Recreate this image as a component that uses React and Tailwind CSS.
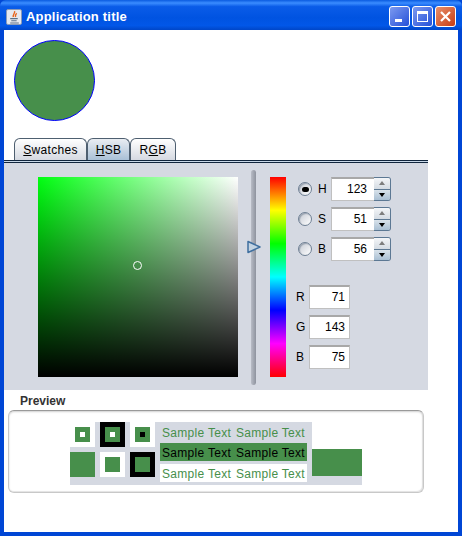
const green = "bg-[#478f4b]";

const Spinner = ({ value, label, checked }) => (
  <div className="flex items-center h-6">
    <span className="w-[14px] h-[14px] rounded-full border border-[#6f8094] flex items-center justify-center bg-[linear-gradient(135deg,#c4c9d3,#ffffff)] shadow-[inset_1px_1px_1px_#9aa3b0]">
      {checked && <span className="w-[7px] h-[5px] rounded-full bg-black" />}
    </span>
    <span className="w-[13px] ml-[6px] text-xs text-black">{label}</span>
    <div className="w-[43px] h-6 bg-white border-t-2 border-[#a8a8a8] border-b border-b-[#c0c0c0] border-l border-l-[#c0c0c0] text-xs text-black text-right pr-[7px] leading-[21px]">
      {value}
    </div>
    <div className="w-[17px] h-6 flex flex-col rounded-r-[3px] overflow-hidden border border-l-0 border-[#5c7893]">
      <div className="flex-1 bg-[linear-gradient(#f4f6f8,#d4dbe3)] flex items-center justify-center">
        <span className="w-0 h-0 border-x-[3px] border-x-transparent border-b-[4px] border-b-[#7d7d7d]" />
      </div>
      <div className="flex-1 bg-[linear-gradient(#d9e2ea,#a9bfd3)] border-t border-[#5c7893] flex items-center justify-center">
        <span className="w-0 h-0 border-x-[3px] border-x-transparent border-t-[4px] border-t-black" />
      </div>
    </div>
  </div>
);

const RgbField = ({ label, value }) => (
  <div className="flex items-center h-6">
    <span className="w-[13px] text-xs text-black">{label}</span>
    <div className="w-[41px] h-6 bg-white border-t-2 border-[#a8a8a8] border-b border-b-[#c0c0c0] border-x border-x-[#c0c0c0] text-xs text-black text-right pr-[4px] leading-[21px]">
      {value}
    </div>
  </div>
);

const Tab = ({ children, className }) => (
  <div className={"h-[22px] border border-b-0 border-[#4e5f70] rounded-t-[6px] flex items-center justify-center text-xs tracking-[0.3px] text-black " + className}>
    {children}
  </div>
);

const Swatch = ({ outer, inner }) => (
  <div className={"w-[25px] h-[25px] flex items-center justify-center " + outer}>
    <div className={"w-[15px] h-[15px] flex items-center justify-center " + green}>
      {inner && <div className={"w-[5px] h-[5px] " + inner} />}
    </div>
  </div>
);

const SampleRow = ({ className }) => (
  <div className={"w-[147px] h-[18px] flex justify-between px-[2px] pt-[1px] text-xs tracking-[0.3px] leading-[18px] " + className}>
    <span>Sample Text</span>
    <span>Sample Text</span>
  </div>
);

const TitleButton = ({ className, children }) => (
  <div className={"w-[21px] h-[21px] rounded-[3px] border border-white flex items-center justify-center " + className}>
    {children}
  </div>
);

export default function App() {
  return (
    <div className="w-[462px] h-[536px] flex flex-col bg-[#0046d5] font-['Liberation_Sans',sans-serif] overflow-hidden">
      <div className="h-[30px] shrink-0 flex items-center pt-[3px] pl-[6px] pr-[6px] rounded-t-[6px] bg-[linear-gradient(#0a5be0_0%,#3b8dff_10%,#0a5ce8_22%,#0053e1_60%,#0257e8_85%,#0046c8_100%)]">
        <div className="w-4 h-4 bg-[#e6e9f0] rounded-[2px] border border-[#8a9ab8] flex items-center justify-center">
          <svg width="13" height="14" viewBox="0 0 12 13">
            <path d="M6 1C7 3 4 4 5 6.500M8 3C7 4 6.500 5 7 6.500" stroke="#e8641c" strokeWidth="1.300" fill="none" />
            <path d="M2 8h7M3 10h5M2 12h8" stroke="#5c7088" strokeWidth="1" fill="none" />
          </svg>
        </div>
        <span className="ml-1 mt-[1px] text-white font-bold text-[13px] tracking-[0.2px]">Application title</span>
        <div className="ml-auto flex gap-[2px]">
          <TitleButton className="bg-[linear-gradient(135deg,#7c9af0,#2550d8)]">
            <div className="w-[7px] h-[3px] bg-white mt-[8px] mr-[3px]" />
          </TitleButton>
          <TitleButton className="bg-[linear-gradient(135deg,#7c9af0,#2550d8)]">
            <div className="w-[11px] h-[11px] border border-t-[3px] border-white" />
          </TitleButton>
          <TitleButton className="bg-[linear-gradient(135deg,#e8906c,#c83c14)]">
            <svg width="13" height="13" viewBox="0 0 13 13">
              <path d="M2 2l9 9M11 2l-9 9" stroke="white" strokeWidth="2.200" />
            </svg>
          </TitleButton>
        </div>
      </div>

      <div className="flex-1 mx-1 mb-1 bg-white flex flex-col">
        <div className={"w-[81px] h-[81px] rounded-full border border-[#0000ff] mt-[10px] ml-[10px] " + green} />

        <div className="w-[424px]">
          <div className="flex mt-[17px] ml-[10px]">
            <Tab className="w-[73px] bg-[linear-gradient(#ffffff,#d5d9e1)]"><span><u>S</u>watches</span></Tab>
            <Tab className="w-[43px] bg-[linear-gradient(#e9edf2,#a9c0d6)]"><span><u>H</u>SB</span></Tab>
            <Tab className="w-[46px] bg-[linear-gradient(#ffffff,#d5d9e1)]"><span>R<u>G</u>B</span></Tab>
          </div>
          <div className="h-[3px] border-t border-b border-[#10243c] bg-[#c8d8e8]" />
          <div className="h-[227px] bg-[#d5d9e2] flex pl-[34px] pt-[14px]">
            <div className="relative w-[200px] h-[200px] bg-[linear-gradient(to_bottom,transparent,black),linear-gradient(to_right,#00ff11,white)]">
              <div className="absolute left-[95px] top-[84px] w-[9px] h-[9px] rounded-full border border-white" />
            </div>
            <div className="relative w-[5px] h-[215px] ml-[13px] -mt-[7px] rounded-full bg-[linear-gradient(to_right,#b8bcc6,#8e939e)]">
              <svg className="absolute -left-[4px] top-[70px]" width="14" height="14" viewBox="0 0 14 14">
                <path d="M1 1.500L13 7L1 12.500Z" fill="#c3d3e2" stroke="#3f6f9f" strokeWidth="1.500" strokeLinejoin="round" />
              </svg>
            </div>
            <div className="w-4 h-[200px] ml-[14px] bg-[linear-gradient(to_bottom,#ff0000,#ffff00,#00ff00,#00ffff,#0000ff,#ff00ff,#ff0000)]" />
            <div className="flex flex-col ml-[10px]">
              <div className="flex flex-col gap-[6px] ml-[2px]">
                <Spinner label="H" value="123" checked />
                <Spinner label="S" value="51" />
                <Spinner label="B" value="56" />
              </div>
              <div className="flex flex-col gap-[6px] mt-6">
                <RgbField label="R" value="71" />
                <RgbField label="G" value="143" />
                <RgbField label="B" value="75" />
              </div>
            </div>
          </div>
        </div>

        <div className="ml-4 mt-[3px] h-[17px] text-xs font-bold text-[#333333] leading-[17px]">Preview</div>
        <div className="w-[416px] h-[83px] ml-1 rounded-[6px] border border-[#c8c8c8] border-t-[#9a9a9a] shadow-[inset_0_1px_2px_#d0d0d0,inset_-1px_-1px_1px_#e4e4e4] flex items-start pl-[61px] pt-[11px]">
          <div className="w-[85px] h-[63px] bg-[#d5d9e2] flex flex-col gap-[5px]">
            <div className="flex justify-between">
              <Swatch outer="bg-white" inner="bg-white" />
              <Swatch outer="bg-black" inner="bg-white" />
              <Swatch outer="bg-white" inner="bg-black" />
            </div>
            <div className="flex justify-between">
              <Swatch outer={green} />
              <Swatch outer="bg-white" />
              <Swatch outer="bg-black" />
            </div>
          </div>
          <div className="w-[157px] h-[63px] bg-[#d5d9e2] flex flex-col gap-[3px] pl-[5px]">
            <SampleRow className="text-[#478f4b] -mb-[1px] mt-[1px]" />
            <SampleRow className={"text-black " + green} />
            <SampleRow className="text-[#478f4b] bg-white" />
          </div>
          <div className="w-[50px] mt-[27px] flex flex-col">
            <div className={"h-[27px] " + green} />
            <div className="h-[9px] bg-[#d5d9e2]" />
          </div>
        </div>
      </div>
    </div>
  );
}
